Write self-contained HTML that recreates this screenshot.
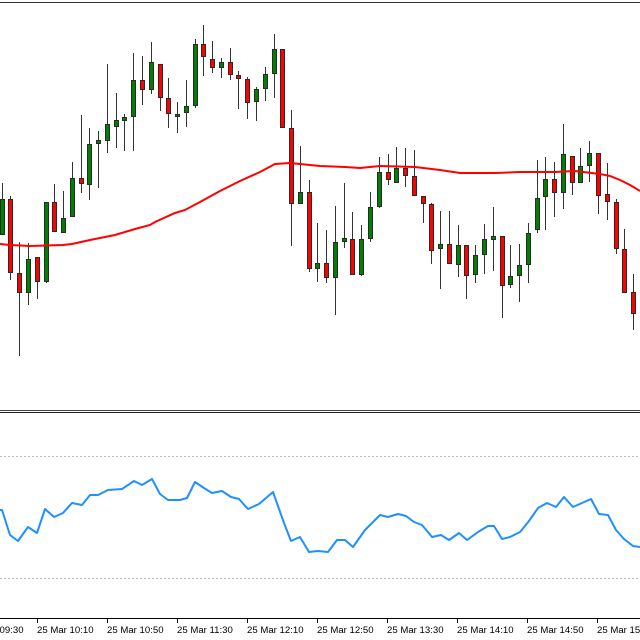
<!DOCTYPE html>
<html><head><meta charset="utf-8"><style>
html,body{margin:0;padding:0;background:#fff;width:640px;height:640px;overflow:hidden}
svg{display:block}
.g{fill:#008000;stroke:#2a2a2a;stroke-width:1}
.r{fill:#ff0000;stroke:#2a2a2a;stroke-width:1}
text{font-family:"Liberation Sans",sans-serif;font-size:9.6px;fill:#000}
</style></head><body>
<svg width="640" height="640" viewBox="0 0 640 640" xmlns="http://www.w3.org/2000/svg">
<rect width="640" height="640" fill="#fff"/>
<line x1="0" y1="2.5" x2="640" y2="2.5" stroke="#333" stroke-width="1"/>
<g id="wicks" stroke="#333" stroke-width="1" fill="none">
<path d="M2.5 183V235M10.5 196V280M19.5 242V356M28.5 243V305M37.5 257V299M46.5 202V283M54.5 184V232M63.5 191V233M72.5 162V217M81.5 115V193M89.5 128V200M98.5 131V188M107.5 64V153M116.5 93V148M124.5 114V151M133.5 53V151M142.5 56V105M151.5 42V94M160.5 64V111M168.5 78V128M177.5 102V133M186.5 80V127M195.5 39V108M203.5 25V76M212.5 41V73M221.5 58V78M230.5 48V80M238.5 71V109M247.5 77V119M256.5 87V121M265.5 67V101M274.5 34V98M282.5 49V128M291.5 110V246M300.5 146V204M309.5 180V272M317.5 223V282M326.5 230V283M335.5 206V315M344.5 183V248M352.5 212V275M361.5 225V276M370.5 192V242M379.5 157V208M388.5 154V185M396.5 147V183M405.5 148V187M414.5 150V196M423.5 196V223M431.5 203V264M440.5 211V289M449.5 211V264M458.5 225V277M466.5 245V299M475.5 245V283M484.5 224V274M493.5 207V271M502.5 236V318M510.5 245V288M519.5 244V302M528.5 223V283M537.5 160V233M545.5 157V230M554.5 162V217M563.5 124V209M572.5 156V195M580.5 148V183M589.5 141V182M598.5 153V214M607.5 163V220M616.5 199V254M624.5 229V293M633.5 274V330"/>
</g>
<g>
<rect class="g" x="0.5" y="199.5" width="4" height="35"/>
<rect class="r" x="8.5" y="199.5" width="4" height="73"/>
<rect class="r" x="17.5" y="273.5" width="4" height="19"/>
<rect class="g" x="26.5" y="259.5" width="4" height="33"/>
<rect class="r" x="35.5" y="257.5" width="4" height="24"/>
<rect class="g" x="44.5" y="202.5" width="4" height="79"/>
<rect class="r" x="52.5" y="202.5" width="4" height="29"/>
<rect class="g" x="61.5" y="218.5" width="4" height="14"/>
<rect class="g" x="70.5" y="178.5" width="4" height="38"/>
<rect class="r" x="79.5" y="178.5" width="4" height="5"/>
<rect class="g" x="87.5" y="144.5" width="4" height="40"/>
<rect class="g" x="96.5" y="140.5" width="4" height="3"/>
<rect class="g" x="105.5" y="124.5" width="4" height="16"/>
<rect class="g" x="114.5" y="120.5" width="4" height="6"/>
<rect class="g" x="122.5" y="117.5" width="4" height="3"/>
<rect class="g" x="131.5" y="80.5" width="4" height="36"/>
<rect class="r" x="140.5" y="80.5" width="4" height="9"/>
<rect class="g" x="149.5" y="62.5" width="4" height="27"/>
<rect class="r" x="158.5" y="64.5" width="4" height="33"/>
<rect class="r" x="166.5" y="98.5" width="4" height="15"/>
<rect class="g" x="175.5" y="114.5" width="4" height="2"/>
<rect class="g" x="184.5" y="106.5" width="4" height="6"/>
<rect class="g" x="193.5" y="44.5" width="4" height="61"/>
<rect class="r" x="201.5" y="44.5" width="4" height="12"/>
<rect class="r" x="210.5" y="59.5" width="4" height="8"/>
<rect class="g" x="219.5" y="62.5" width="4" height="5"/>
<rect class="r" x="228.5" y="62.5" width="4" height="12"/>
<rect class="r" x="236.5" y="75.5" width="4" height="3"/>
<rect class="r" x="245.5" y="79.5" width="4" height="23"/>
<rect class="g" x="254.5" y="89.5" width="4" height="12"/>
<rect class="g" x="263.5" y="74.5" width="4" height="14"/>
<rect class="g" x="272.5" y="49.5" width="4" height="24"/>
<rect class="r" x="280.5" y="49.5" width="4" height="78"/>
<rect class="r" x="289.5" y="128.5" width="4" height="75"/>
<rect class="g" x="298.5" y="192.5" width="4" height="11"/>
<rect class="r" x="307.5" y="192.5" width="4" height="76"/>
<rect class="g" x="315.5" y="263.5" width="4" height="5"/>
<rect class="r" x="324.5" y="263.5" width="4" height="14"/>
<rect class="g" x="333.5" y="242.5" width="4" height="35"/>
<rect class="g" x="342.5" y="238.5" width="4" height="3"/>
<rect class="r" x="350.5" y="239.5" width="4" height="35"/>
<rect class="g" x="359.5" y="239.5" width="4" height="35"/>
<rect class="g" x="368.5" y="207.5" width="4" height="31"/>
<rect class="g" x="377.5" y="172.5" width="4" height="34"/>
<rect class="r" x="386.5" y="172.5" width="4" height="7"/>
<rect class="g" x="394.5" y="168.5" width="4" height="14"/>
<rect class="r" x="403.5" y="168.5" width="4" height="7"/>
<rect class="r" x="412.5" y="176.5" width="4" height="19"/>
<rect class="r" x="421.5" y="196.5" width="4" height="7"/>
<rect class="r" x="429.5" y="204.5" width="4" height="46"/>
<rect class="g" x="438.5" y="244.5" width="4" height="4"/>
<rect class="r" x="447.5" y="244.5" width="4" height="19"/>
<rect class="g" x="456.5" y="245.5" width="4" height="19"/>
<rect class="r" x="464.5" y="245.5" width="4" height="30"/>
<rect class="g" x="473.5" y="255.5" width="4" height="19"/>
<rect class="g" x="482.5" y="239.5" width="4" height="15"/>
<rect class="g" x="491.5" y="236.5" width="4" height="3"/>
<rect class="r" x="500.5" y="236.5" width="4" height="49"/>
<rect class="g" x="508.5" y="276.5" width="4" height="8"/>
<rect class="g" x="517.5" y="265.5" width="4" height="10"/>
<rect class="g" x="526.5" y="233.5" width="4" height="31"/>
<rect class="g" x="535.5" y="198.5" width="4" height="31"/>
<rect class="g" x="543.5" y="179.5" width="4" height="17"/>
<rect class="r" x="552.5" y="179.5" width="4" height="13"/>
<rect class="g" x="561.5" y="154.5" width="4" height="38"/>
<rect class="r" x="570.5" y="156.5" width="4" height="26"/>
<rect class="g" x="578.5" y="166.5" width="4" height="16"/>
<rect class="g" x="587.5" y="153.5" width="4" height="12"/>
<rect class="r" x="596.5" y="153.5" width="4" height="42"/>
<rect class="r" x="605.5" y="194.5" width="4" height="7"/>
<rect class="r" x="614.5" y="202.5" width="4" height="46"/>
<rect class="r" x="622.5" y="249.5" width="4" height="43"/>
<rect class="r" x="631.5" y="292.5" width="4" height="21"/>
</g>
<polyline fill="none" stroke="#ff0000" stroke-width="2" points="0,244 10,245 30,246 63,245 72,244 90,240 115,235 135,229 150,225 155,222 175,213 185,210 200,202 220,191 240,181 260,172 275,164 290,163 300,164 320,166 345,167 360,168 380,166 415,167 440,170 460,173 495,173 520,172 555,172 575,171 600,174 610,176 620,180 630,185 640,191"/>
<line x1="0" y1="410.5" x2="640" y2="410.5" stroke="#444" stroke-width="1"/>
<line x1="0" y1="412.5" x2="640" y2="412.5" stroke="#222" stroke-width="1"/>
<line x1="0" y1="456.5" x2="640" y2="456.5" stroke="#bbb" stroke-width="1" stroke-dasharray="2,2"/>
<line x1="0" y1="578.5" x2="640" y2="578.5" stroke="#bbb" stroke-width="1" stroke-dasharray="2,2"/>
<polyline fill="none" stroke="#1e90ff" stroke-width="2" stroke-linejoin="round" points="0,510 2,510 10,535 18,541 28,527 37,533 45,509 54,517 63,513 72,503 82,505 90,495 98,495 108,490 122,489 134,481 142,485 152,479 160,494 168,500 180,500 187,498 195,482 204,488 212,493 222,491 231,497 239,499 248,509 259,504 273,492 284,523 291,541 300,537 309,552 318,551 328,552 337,540 345,540 353,547 365,530 380,515 388,517 398,514 406,516 414,522 422,525 432,537 441,535 449,540 459,533 467,540 478,532 488,526 494,526 502,539 510,537 520,532 529,521 538,508 547,503 556,507 564,497 573,507 591,499 599,514 608,515 616,530 624,539 633,546 640,547"/>
<line x1="0" y1="618.5" x2="640" y2="618.5" stroke="#000" stroke-width="1"/>
<path stroke="#000" stroke-width="1" d="M37.5 618V623M107.5 618V623M177.5 618V623M247.5 618V623M317.5 618V623M387.5 618V623M457.5 618V623M527.5 618V623M597.5 618V623"/>
<text x="-33" y="633">25 Mar 09:30</text>
<text x="37" y="633">25 Mar 10:10</text>
<text x="107" y="633">25 Mar 10:50</text>
<text x="177" y="633">25 Mar 11:30</text>
<text x="247" y="633">25 Mar 12:10</text>
<text x="317" y="633">25 Mar 12:50</text>
<text x="387" y="633">25 Mar 13:30</text>
<text x="457" y="633">25 Mar 14:10</text>
<text x="527" y="633">25 Mar 14:50</text>
<text x="597" y="633">25 Mar 15:30</text>
</svg>
</body></html>
